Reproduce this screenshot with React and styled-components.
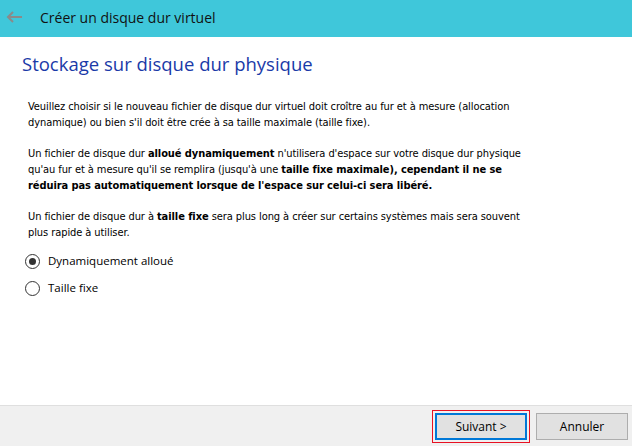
import React from 'react'
import styled, {createGlobalStyle} from 'styled-components'

const Global = createGlobalStyle`
    html, body {
        margin: 0;
        padding: 0;
        background: #fff;
    }
    #root {
        width: 632px;
        height: 446px;
    }
`

const Window = styled.div`
    width: 632px;
    height: 446px;
    display: flex;
    flex-direction: column;
    background: #fff;
    overflow: hidden;
`

const TitleBar = styled.div`
    height: 37px;
    flex: none;
    background: #3fc7da;
    display: flex;
    align-items: center;
    padding: 0 0 3px 5px;
    box-sizing: border-box;
`

const Back = styled.svg`
    width: 18px;
    height: 14px;
    margin-right: 17px;
`

const Title = styled.span`
    font-family: "Open Sans", "Noto Sans", sans-serif;
    font-size: 14px;
    color: #111;
`

const Content = styled.div`
    flex: 1;
    padding: 14px 22px 0 22px;
`

const Heading = styled.h1`
    margin: 0 0 23px 0;
    font-family: "Open Sans", "Noto Sans", sans-serif;
    font-weight: 400;
    font-size: 18.5px;
    color: #1a3aa8;
`

const Body = styled.div`
    padding-left: 6px;
    font-family: "DejaVu Sans Condensed", "DejaVu Sans", sans-serif;
    font-size: 11px;
    letter-spacing: -0.08px;
    line-height: 16px;
    color: #000;
    white-space: nowrap;
`

const Para = styled.p`
    margin: 0 0 15px 0;
    b {
        font-weight: 700;
    }
`

const Options = styled.div`
    display: flex;
    flex-direction: column;
    gap: 11px;
    margin: -3px 0 0 -3px;
`

const Option = styled.label`
    display: flex;
    align-items: center;
    gap: 8px;
    font-family: "Open Sans", "Noto Sans", sans-serif;
    font-size: 11.5px;
    letter-spacing: 0;
    color: #000;
`

const Dot = styled.span`
    width: 13px;
    height: 13px;
    border-radius: 50%;
    border: 1px solid #333;
    display: flex;
    align-items: center;
    justify-content: center;
    background: #fff;
    &::after {
        content: '';
        width: 7px;
        height: 7px;
        border-radius: 50%;
        background: ${p => p.checked ? '#333' : 'transparent'};
    }
`

const Footer = styled.div`
    height: 40px;
    flex: none;
    background: #f0f0f0;
    border-top: 1px solid #dfdfdf;
    display: flex;
    justify-content: flex-end;
    align-items: center;
    gap: 6px;
    padding: 0 4px 0 0;
`

const Focus = styled.div`
    border: 1px solid #e81123;
    padding: 2px;
    display: flex;
`

const Button = styled.button`
    width: 92px;
    height: 27px;
    box-sizing: border-box;
    background: #e1e1e1;
    border: ${p => p.primary ? '2px solid #0078d7' : '1px solid #adadad'};
    font-family: "Open Sans", "Noto Sans", sans-serif;
    font-size: 12px;
    color: #000;
    padding: 0;
`

export default function App(){
    return(
        <Window>
            <Global />
            <TitleBar>
                <Back viewBox="0 0 18 14">
                    <path d="M17 7H3M8 2L3 7l5 5" fill="none" stroke="#8a8a8a" strokeWidth="2" />
                </Back>
                <Title>Créer un disque dur virtuel</Title>
            </TitleBar>
            <Content>
                <Heading>Stockage sur disque dur physique</Heading>
                <Body>
                    <Para>
                        Veuillez choisir si le nouveau fichier de disque dur virtuel doit croître au fur et à mesure (allocation<br />
                        dynamique) ou bien s'il doit être crée à sa taille maximale (taille fixe).
                    </Para>
                    <Para>
                        Un fichier de disque dur <b>alloué dynamiquement</b> n'utilisera d'espace sur votre disque dur physique<br />
                        qu'au fur et à mesure qu'il se remplira (jusqu'à une <b>taille fixe maximale), cependant il ne se</b><br />
                        <b>réduira pas automatiquement lorsque de l'espace sur celui-ci sera libéré.</b>
                    </Para>
                    <Para>
                        Un fichier de disque dur à <b>taille fixe</b> sera plus long à créer sur certains systèmes mais sera souvent<br />
                        plus rapide à utiliser.
                    </Para>
                    <Options>
                        <Option><Dot checked />Dynamiquement alloué</Option>
                        <Option><Dot />Taille fixe</Option>
                    </Options>
                </Body>
            </Content>
            <Footer>
                <Focus><Button primary>Suivant &gt;</Button></Focus>
                <Button>Annuler</Button>
            </Footer>
        </Window>
    )
}
